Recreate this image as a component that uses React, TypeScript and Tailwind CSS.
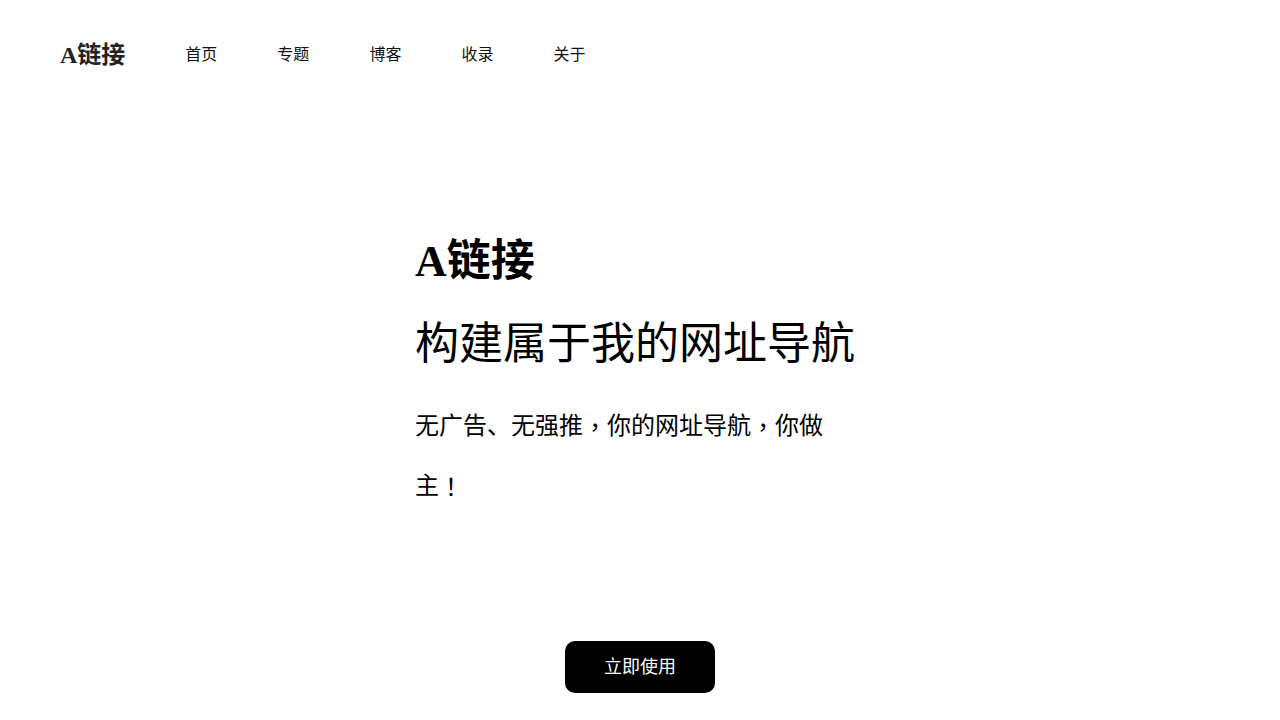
import React from 'react'

const navItems = ['首页', '专题', '博客', '收录', '关于']

// the reference sets full-width punctuation centred in its box
function P({ children }: { children: React.ReactNode }) {
  return <span className="align-top font-['Noto_Sans_CJK_TC',sans-serif]">{children}</span>
}

export default function App() {
  return (
    <div className="min-h-screen bg-white text-black font-['Liberation_Serif','Noto_Sans_CJK_SC',serif]">
      <header className="flex h-[108px] items-center px-[60px] pt-[1px]">
        <a className="text-[24px] font-bold leading-none text-[#222]">A链接</a>
        <nav className="ml-[60px] flex gap-[60px]">
          {navItems.map((item) => (
            <a key={item} className="text-[16px] leading-none text-[#111]">{item}</a>
          ))}
        </nav>
      </header>

      <main className="flex flex-col items-center">
        <div className="mt-[124px] w-[450px]">
          <h1 className="text-[44px] font-bold leading-[60px]">A链接</h1>
          <h2 className="mt-[23px] text-[44px] leading-[60px]">构建属于我的网址导航</h2>
          <p className="mt-[21px] h-[120px] max-w-[420px] text-[24px] leading-[60px]">
            无广告、无强推<P>，</P>你的网址导航<P>，</P>你做主<P>！</P>
          </p>
        </div>
        <button className="mt-[125px] h-[52px] w-[150px] rounded-[10px] bg-black text-[18px] text-white">立即使用</button>
      </main>
    </div>
  )
}
